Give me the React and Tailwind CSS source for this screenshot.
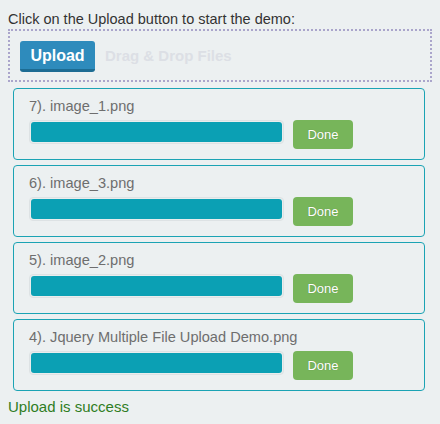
import React from "react";

const files = [
  "7). image_1.png",
  "6). image_3.png",
  "5). image_2.png",
  "4). Jquery Multiple File Upload Demo.png",
];

function FileCard({ name }) {
  return (
    <div className="h-[72px] rounded-[4px] border border-[#1ba3b4] pl-[15px] pt-[7px]">
      <div className="h-[20px] text-[14.6px] leading-[20px] text-[#6e6e6e]">{name}</div>
      <div className="mt-[4px] flex items-start gap-[9px]">
        <div className="h-[24px] w-[255px] rounded-[4px] border border-[#dde2e4] bg-[#e9eded] p-[1px]">
          <div className="h-full w-full rounded-[3px] bg-[#0ba0b4]" />
        </div>
        <div className="flex h-[29px] w-[60px] items-center justify-center rounded-[4px] bg-[#77b55a] text-[13px] text-white [text-shadow:0_0_1px_rgba(0,0,0,0.25)]">
          Done
        </div>
      </div>
    </div>
  );
}

export default function App() {
  return (
    <div
      className="h-[424px] w-[440px] bg-[#ecf0f1] pl-[8px] pt-[9px] text-[#333]"
      style={{ fontFamily: '"Liberation Sans", Arial, sans-serif' }}
    >
      <div className="h-[20px] text-[14.5px] leading-[20px] text-[#333]">
        Click on the Upload button to start the demo:
      </div>
      <div className="flex h-[53px] w-[424px] items-start gap-[10px] border-2 border-dotted border-[#aaa5cb] pl-[10px] pt-[10px]">
        <div className="flex h-[31px] w-[75px] items-center justify-center rounded-[3px] border-b-[3px] border-[#1d6c93] bg-[#2e8bbc] pt-[2px] text-[16px] font-bold text-white">
          Upload
        </div>
        <div className="flex h-[31px] items-center text-[15px] font-bold text-[#dcdfe5]">
          Drag &amp; Drop Files
        </div>
      </div>
      <div className="ml-[5px] mt-[6px] flex w-[412px] flex-col gap-[5px]">
        {files.map((f) => (
          <FileCard key={f} name={f} />
        ))}
      </div>
      <div className="mt-[6px] h-[20px] text-[15px] leading-[20px] text-[#2f7d1f]">
        Upload is success
      </div>
    </div>
  );
}
